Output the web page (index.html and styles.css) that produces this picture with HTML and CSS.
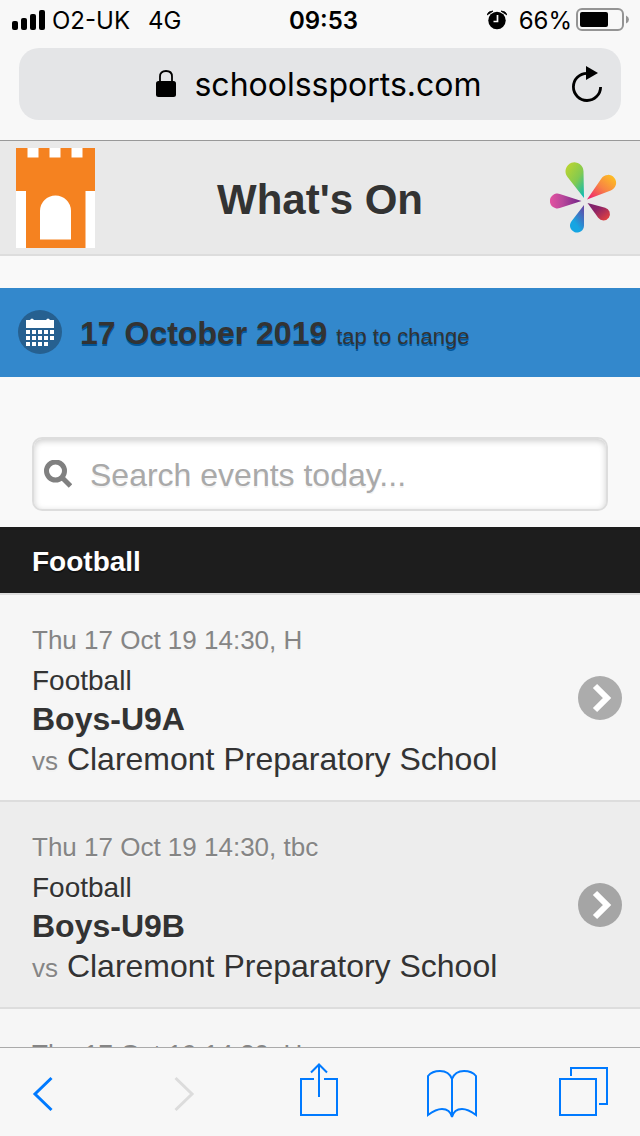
FILE: index.html
```html
<!DOCTYPE html>
<html lang="en">
<head>
<meta charset="utf-8">
<meta name="viewport" content="width=device-width, initial-scale=1">
<title>What's On</title>
<link rel="stylesheet" href="styles.css">
</head>
<body>
<div class="browser-top">
  <div class="status">
    <div class="status-left">
      <svg width="34" height="20" viewBox="0 0 34 20" aria-hidden="true"><rect x="0" y="11" width="6" height="9" rx="2"/><rect x="9" y="8" width="6" height="12" rx="2"/><rect x="18" y="4" width="6" height="16" rx="2"/><rect x="27" y="0" width="6" height="20" rx="2"/></svg>
      <span class="carrier">O2-UK</span><span>4G</span>
    </div>
    <time class="clock">09:53</time>
    <div class="status-right">
      <svg width="20" height="20" viewBox="0 0 20 20" aria-hidden="true"><circle cx="10" cy="10.500" r="8.700"/><path d="M0 5Q1 1 6 1L4 2.500zM20 5Q19 1 14 1l2 1.500z" stroke="#000" stroke-width=".8"/><path d="M10.500 5v6.500h-4" fill="none" stroke="#f8f8f8" stroke-width="1.700"/></svg>
      <span class="percent">66%</span>
      <svg width="53" height="24" viewBox="0 0 53 24" aria-hidden="true"><rect x="1" y="1" width="46" height="21" rx="5" fill="none" stroke="#949494" stroke-width="2"/><rect x="4" y="4" width="28" height="15" rx="2"/><path d="M50 7.500q3 1.500 3 4t-3 4z" fill="#949494"/></svg>
    </div>
  </div>
  <div class="address">
    <span></span>
    <div class="site">
      <svg width="20" height="28" viewBox="0 0 20 28" aria-hidden="true"><path d="M4 13V6.500q0-5.500 6-5.500t6 5.500V13" fill="none" stroke="#000" stroke-width="1.800"/><rect x="0" y="11" width="20" height="16" rx="2.500"/></svg>
      <span>schoolssports.com</span>
    </div>
    <button class="reload" aria-label="Reload">
      <svg width="32" height="36" viewBox="0 0 32 36"><path d="M16 7.300A13.600 13.600 0 1 0 29.600 21" fill="none" stroke="#000" stroke-width="2.800"/><path d="M15 0v14l12-7z"/></svg>
    </button>
  </div>
</div>

<main class="page">
  <header class="title-bar">
    <a href="#home" aria-label="School home">
      <svg width="79" height="100" viewBox="0 0 79 100"><path fill="#fff" d="M0 0h79v100H0z"/><path fill="#f58220" d="M0 0h11.500v9.500h11V0h11v9.500h11V0h11v9.500h11V0H79v43h-9.500v57H10V43H0z"/><path fill="#fff" d="M24 91.500V63a15.500 15.500 0 0 1 31 0v28.500z"/></svg>
    </a>
    <h1>What's On</h1>
    <a class="right" href="#menu" aria-label="Menu">
      <svg width="68" height="72" viewBox="0 0 68 72">
        <defs>
          <linearGradient id="green" x1=".2" y1="0" x2="1" y2="1"><stop stop-color="#b9d432"/><stop offset=".5" stop-color="#83ca50"/><stop offset="1" stop-color="#00b9bd"/></linearGradient>
          <linearGradient id="orange" x1="1" y1="0" x2="0" y2="1"><stop offset=".1" stop-color="#fdbb25"/><stop offset=".5" stop-color="#f88345"/><stop offset="1" stop-color="#ee1675"/></linearGradient>
          <linearGradient id="red" x1="0" y1="0" x2="1" y2="1"><stop stop-color="#78206f"/><stop offset=".4" stop-color="#8d2466"/><stop offset="1" stop-color="#f04639"/></linearGradient>
          <linearGradient id="blue" x1="1" y1="0" x2=".3" y2="1"><stop stop-color="#6b3fa0"/><stop offset=".75" stop-color="#16a5e2"/></linearGradient>
          <linearGradient id="pink"><stop stop-color="#e452a0"/><stop offset=".4" stop-color="#b9479b"/><stop offset="1" stop-color="#6e2387"/></linearGradient>
        </defs>
        <path fill="url(#green)" d="M34 36L17.500 15A9 9 0 1 1 33.500 9.300z"/>
        <path fill="url(#orange)" d="M37 37.500L51.400 16.500A8 8 0 1 1 60.800 28.400z"/>
        <path fill="url(#red)" d="M37.500 41L55.200 45.700A6.500 6.500 0 1 1 48.200 55.800z"/>
        <path fill="url(#blue)" d="M34 43V63.500A7 7 0 1 1 21.500 59.200z"/>
        <path fill="url(#pink)" d="M31.500 39L9.800 46.100A7.500 7.500 0 1 1 9.800 31.900z"/>
      </svg>
    </a>
  </header>

  <button class="date-bar">
    <svg width="44" height="44" viewBox="0 0 44 44" aria-hidden="true"><circle cx="22" cy="22" r="22" fill="#266090"/><g fill="#fff"><path d="M8 10h4q2-3 4 0h12q2-3 4 0h4v8H8z"/><path d="M8 20h4v4H8zM14 20h4v4h-4zM20 20h4v4h-4zM26 20h4v4h-4zM32 20h4v4h-4zM8 26h4v4H8zM14 26h4v4h-4zM20 26h4v4h-4zM26 26h4v4h-4zM32 26h4v4h-4zM8 32h4v4H8zM14 32h4v4h-4zM20 32h4v4h-4zM26 32h4v4h-4z"/></g></svg>
    <span><strong>17 October 2019</strong> <small>tap to change</small></span>
  </button>

  <label class="search">
    <svg width="28" height="28" viewBox="0 0 28 28" aria-hidden="true"><circle cx="11.500" cy="11" r="9"/><path d="M17.500 17l9 9"/></svg>
    <input type="search" aria-label="Search events" placeholder="Search events today...">
  </label>

  <h2 class="sport">Football</h2>
  <ul class="events">
    <li><a class="event" href="#u9a"><div class="details"><p class="when">Thu 17 Oct 19 14:30, H</p><p class="kind">Football</p><h3>Boys-U9A</h3><p class="opponent"><small>vs</small> Claremont Preparatory School</p></div><svg width="44" height="44" viewBox="0 0 44 44" aria-hidden="true"><circle cx="22" cy="22" r="22" fill="#acacac"/><path d="M17 10L29 22 17 34" fill="none" stroke="#fff" stroke-width="6"/></svg></a></li>
    <li><a class="event shaded" href="#u9b"><div class="details"><p class="when">Thu 17 Oct 19 14:30, tbc</p><p class="kind">Football</p><h3>Boys-U9B</h3><p class="opponent"><small>vs</small> Claremont Preparatory School</p></div><svg width="44" height="44" viewBox="0 0 44 44" aria-hidden="true"><circle cx="22" cy="22" r="22" fill="#a5a5a5"/><path d="M17 10L29 22 17 34" fill="none" stroke="#fff" stroke-width="6"/></svg></a></li>
    <li><a class="event" href="#next"><div class="details"><p class="when">Thu 17 Oct 19 14:30, H</p></div></a></li>
  </ul>
</main>

<nav class="toolbar" aria-label="Browser">
  <button aria-label="Back"><svg width="22" height="54" viewBox="0 0 22 54"><path d="M19.500 15L3 31l16.500 16" stroke-width="3"/></svg></button>
  <button aria-label="Forward" disabled><svg width="22" height="54" viewBox="0 0 22 54"><path d="M2.500 15L19 31 2.500 47" stroke-width="3"/></svg></button>
  <button aria-label="Share"><svg width="38" height="54" viewBox="0 0 38 54"><path d="M14 16H1v36h36V16H24M19 34V2M11 9.500l8-8 8 8"/></svg></button>
  <button aria-label="Bookmarks"><svg width="50" height="55" viewBox="0 0 50 55"><path d="M25 54V16Q22 8 13 8 5 8 1 13v39Q9 46 15 46 23 46 25 54 27 46 35 46 41 46 49 52V13Q45 8 37 8 28 8 25 16"/></svg></button>
  <button aria-label="Tabs"><svg width="50" height="54" viewBox="0 0 50 54"><path d="M2 16h36v36H2zM13 13V5h36v36h-8"/></svg></button>
</nav>
</body>
</html>
```
FILE: styles.css
```css
* { box-sizing: border-box; }

body {
  margin: 0;
  height: 100vh;
  display: flex;
  flex-direction: column;
  overflow: hidden;
  background: #f9f9f9;
  color: #333;
  font-family: "Liberation Sans", Arial, sans-serif;
}

h1, h2, h3, p, ul { margin: 0; padding: 0; }
ul { list-style: none; }
svg { display: block; flex: none; }
a { color: inherit; text-decoration: none; }
button { margin: 0; padding: 0; border: 0; background: none; font: inherit; color: inherit; cursor: pointer; }

.browser-top {
  flex: none;
  padding-bottom: 20px;
  background: #f8f8f8;
  border-bottom: 1px solid #999;
  color: #000;
  font-family: Inter, sans-serif;
}

.status {
  display: grid;
  grid-template-columns: 1fr auto 1fr;
  align-items: center;
  height: 40px;
  margin-bottom: 8px;
  padding: 0 11px 0 12px;
  font-size: 24px;
  line-height: 38px;
}
.status span, .clock { padding-top: 2px; }
.status-left, .status-right { display: flex; align-items: center; }
.status-left { gap: 6px; }
.status-right { justify-content: flex-end; }
.carrier { margin-right: 12px; }
.clock { font-weight: 600; padding-left: 6px; }
.percent { margin: 0 4px 0 12px; }

.address {
  display: grid;
  grid-template-columns: 1fr auto 1fr;
  align-items: center;
  height: 72px;
  margin: 0 19px;
  padding: 0 18px;
  border-radius: 20px;
  background: #e4e5e7;
}
.site { display: flex; align-items: center; gap: 18px; padding-right: 2px; font-size: 32px; line-height: 40px; }
.site span { padding-top: 2px; }
.reload { justify-self: end; }

.page { flex: 1; min-height: 0; overflow: hidden; }

.title-bar {
  display: grid;
  grid-template-columns: 1fr auto 1fr;
  align-items: center;
  padding: 7px 16px 6px;
  margin-bottom: 32px;
  background: #e9e9e9;
  border-bottom: 2px solid #ddd;
}
.title-bar h1 { padding-top: 4px; font-size: 42px; line-height: 48px; text-shadow: 0 2px 0 #eee; }
.title-bar .right { justify-self: end; margin-right: 6px; }

.date-bar {
  display: flex;
  align-items: center;
  gap: 18px;
  width: 100%;
  height: 89px;
  margin-bottom: 60px;
  padding: 0 18px 1px;
  background: #3388cc;
  font-size: 32px;
  text-align: left;
  text-shadow: 0 2px 0 #005599;
}
.date-bar span { padding-top: 2px; }
.date-bar small { font-size: 22px; }

.search {
  display: flex;
  align-items: center;
  gap: 18px;
  height: 74px;
  margin: 0 32px 16px;
  padding: 0 10px;
  border: 2px solid #ddd;
  border-radius: 10px;
  background: #fff;
  box-shadow: inset 0 2px 6px rgba(0, 0, 0, 0.2);
}
.search svg { fill: none; stroke: #808080; stroke-width: 5; }
.search input {
  flex: 1;
  min-width: 0;
  padding: 2px 0 0;
  border: 0;
  outline: 0;
  background: none;
  color: #333;
  font: 32px "Liberation Sans", Arial, sans-serif;
  text-shadow: 0 2px 0 #f3f3f3;
}
.search input::placeholder { color: #a9a9a9; }

.sport {
  padding: 4px 32px 0;
  background: #1d1d1d;
  border-bottom: 2px solid #ddd;
  color: #fff;
  font-size: 28px;
  line-height: 62px;
  text-shadow: 0 2px 0 #111;
}

.event {
  display: flex;
  align-items: center;
  justify-content: space-between;
  padding: 19px 18px 19px 32px;
  background: #f6f6f6;
  border-bottom: 2px solid #ddd;
  text-shadow: 0 2px 0 #f3f3f3;
}
.details { padding-top: 7px; }
.shaded { background: #ededed; }
.when { color: #858585; font-size: 26px; line-height: 39px; }
.kind { font-size: 28px; line-height: 41px; }
.event h3 { font-size: 32px; line-height: 36px; }
.opponent { font-size: 32px; line-height: 44px; }
.opponent small { color: #858585; font-size: 26px; line-height: 26px; }

.toolbar {
  flex: none;
  display: grid;
  grid-template-columns: 141fr 127fr 127fr 131fr auto;
  align-items: start;
  justify-items: start;
  height: 89px;
  padding: 15px 32px 0;
  background: #f7f7f7;
  border-top: 1px solid #aaa;
}
.toolbar svg { fill: none; stroke: #007aff; stroke-width: 2; }
.toolbar button:disabled svg { stroke: #dcdcdc; }
```
